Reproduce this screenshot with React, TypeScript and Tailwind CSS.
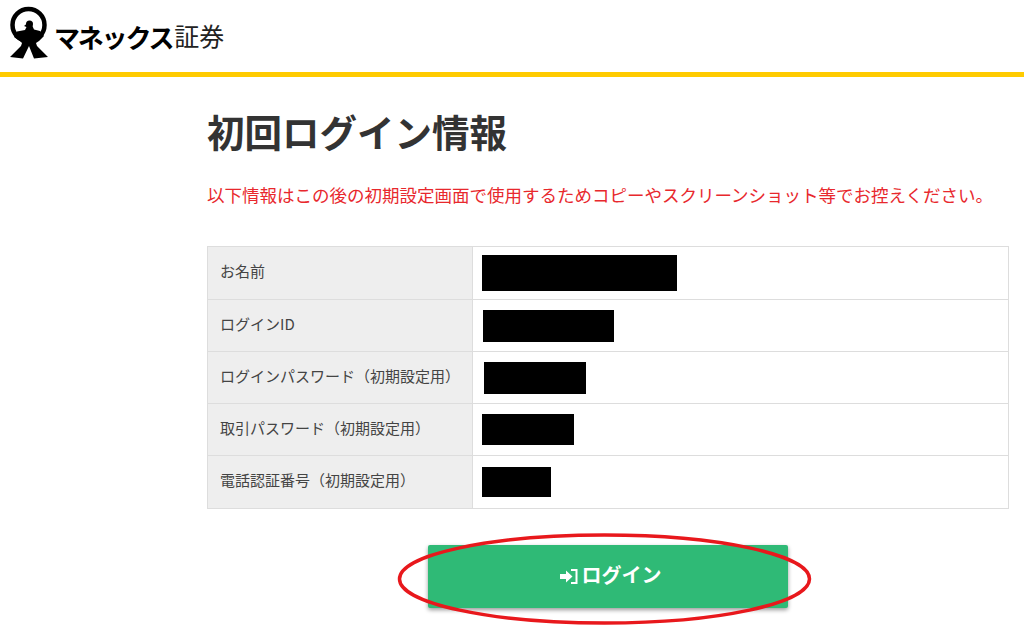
const font = { fontFamily: '"Noto Sans CJK JP", "Liberation Sans", sans-serif' };

const rows = [
  { label: "お名前", w: "w-[195px]", ml: "ml-[9px]", h: "h-[36px]", rowH: "h-[53px]" },
  { label: "ログインID", w: "w-[131px]", ml: "ml-[10px]", h: "h-[32px]", rowH: "h-[52px]" },
  { label: "ログインパスワード（初期設定用）", w: "w-[102px]", ml: "ml-[11px]", h: "h-[32px]", rowH: "h-[52px]" },
  { label: "取引パスワード（初期設定用）", w: "w-[92px]", ml: "ml-[9px]", h: "h-[31px]", rowH: "h-[52px]" },
  { label: "電話認証番号（初期設定用）", w: "w-[69px]", ml: "ml-[9px]", h: "h-[30px]", rowH: "h-[53px]" },
];

function Logo() {
  return (
    <svg width="41" height="64" viewBox="9 4 41 64" className="shrink-0">
      <circle cx="28.500" cy="25" r="16" fill="none" stroke="#000" strokeWidth="4.500" />
      <circle cx="29.500" cy="24" r="3.500" fill="#000" />
      <path
        d="M27 23.500 L24 26 L26.500 27 L25 30 L17 31.500 L14 37 L20 41 L22 43 L21 46 L10 57 L23 58.500 L29 46 L34 58.500 L48 57 L37 46 L36 43 L39 41 L44 36 L40 31 L34 29.500 L32 25 Z"
        fill="#000"
      />
    </svg>
  );
}

export default function App() {
  return (
    <div className="relative h-[626px] w-[1024px] overflow-hidden bg-white text-[#333]" style={font}>
      <header className="flex h-[72px] items-center pl-[9px]">
        <Logo />
        <span className="ml-[4px] text-[26px] font-bold tracking-[-2.200px] text-black">マネックス</span>
        <span className="ml-[2px] text-[25px] font-normal text-[#222]">証券</span>
      </header>
      <div className="h-[5px] bg-[#ffcb00]" />

      <main className="ml-[207px] mr-[15px]">
        <h1 className="mt-[28px] text-[37.500px] font-bold leading-[52px]">初回ログイン情報</h1>
        <p className="mt-[26px] whitespace-nowrap text-[17.500px] leading-[24px] text-[#e8282d]">
          以下情報はこの後の初期設定画面で使用するためコピーやスクリーンショット等でお控えください。
        </p>

        <div className="mt-[39px] border-t border-l border-r border-[#ddd]">
          {rows.map((r) => (
            <div key={r.label} className={`flex ${r.rowH} border-b border-[#ddd]`}>
              <div className="flex w-[265px] items-center border-r border-[#ddd] bg-[#eee] pb-[3px] pl-[12px] text-[15px] text-[#444]">
                {r.label}
              </div>
              <div className="flex flex-1 items-center">
                <div className={`${r.ml} ${r.w} ${r.h} bg-black`} />
              </div>
            </div>
          ))}
        </div>

        <div className="mt-[36px] ml-[221px] flex h-[63px] w-[360px] items-center justify-center gap-[4px] rounded-[2px] bg-[#2fba76] pl-[5px] text-[20px] font-bold text-white shadow-[0_2px_4px_rgba(0,0,0,0.4)]">
          <svg width="18" height="17" viewBox="0 0 18 17" fill="#fff">
            <path d="M0 6h6V2.500l6.500 6-6.500 6V11H0z" />
            <path d="M11 1h6.500v15H11v-2h4.500V3H11z" />
          </svg>
          <span className="mb-[4px]">ログイン</span>
        </div>
      </main>

      {/* hand-drawn annotation over the button */}
      <svg className="absolute left-[395px] top-[530px]" width="420" height="96" viewBox="0 0 420 96" fill="none">
        <ellipse cx="209.500" cy="49" rx="205" ry="44" stroke="#e8181c" strokeWidth="3.500" />
      </svg>
    </div>
  );
}
